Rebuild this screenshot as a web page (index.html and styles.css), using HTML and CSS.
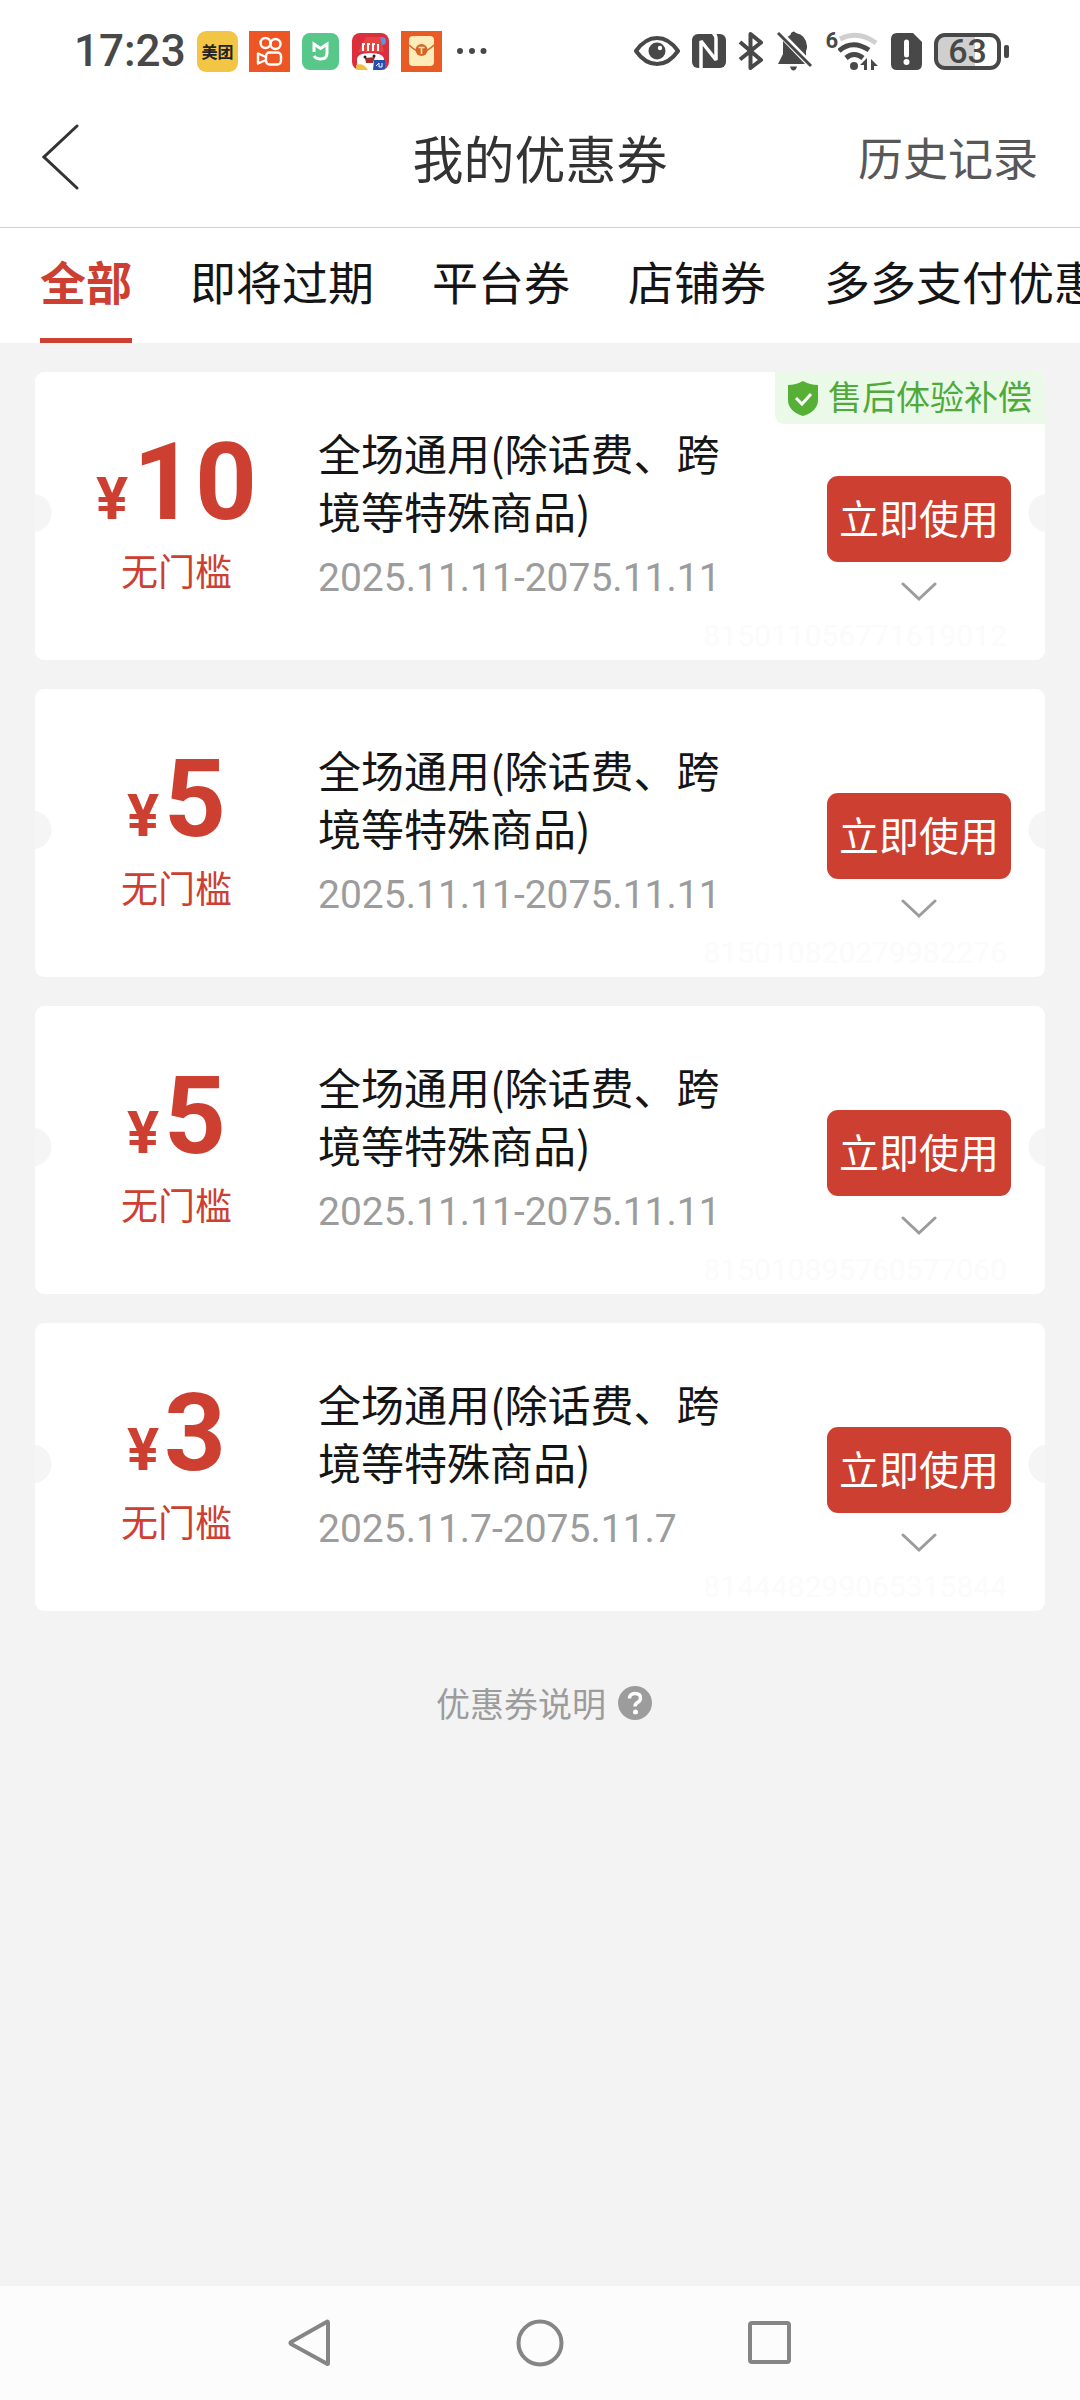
FILE: index.html
```html
<!DOCTYPE html>
<html lang="zh-CN">
<head>
<meta charset="utf-8">
<meta name="viewport" content="width=device-width, initial-scale=1">
<title>我的优惠券</title>
<link rel="stylesheet" href="styles.css">
</head>
<body>
<div class="screen">
  <div class="status">
    <span class="status-time">17:23</span>
    <div class="status-apps">
      <span class="app-meituan">美团</span>
      <svg width="41" height="41" viewBox="0 0 41 41"><rect width="41" height="41" fill="#ee5524"/><g fill="none" stroke="#fff" stroke-width="2.4" stroke-linejoin="round"><circle cx="16.500" cy="12" r="5"/><circle cx="26.500" cy="13" r="5"/><rect x="17" y="21.500" width="15" height="12" rx="3.500"/><path d="M17 26l-8-3.500v10l8-3.500"/></g></svg>
      <svg class="app-small" width="37" height="37" viewBox="0 0 37 37"><rect width="37" height="37" rx="8" fill="#57c78a"/><path d="M12 19V11l6.500 4.500L25 11v9q0 6-6.500 6-4.500 0-6.500-3" fill="none" stroke="#fff" stroke-width="3"/></svg>
      <svg class="app-small" width="37" height="37" viewBox="0 0 37 37"><clipPath id="festive"><rect width="37" height="37" rx="8"/></clipPath><g clip-path="url(#festive)"><rect width="37" height="37" fill="#dc2f3d"/><circle cx="30" cy="8" r="4" fill="#5d92dd"/><path d="M6 19L14 4l14 0 4 15z" fill="#e84340"/><path d="M11 18v-7M16 18v-7M21 18v-7M26 18v-7M10 11h3M15 11h3M20 11h3" stroke="#fff" stroke-width="2" fill="none"/><path d="M5 27q0-7 13-7 14 0 14 7v10H5z" fill="#fff"/><path d="M13 25l10-1-2 6h-7z" fill="#a72c27"/><circle cx="13" cy="24" r="1.500" fill="#222"/><circle cx="22" cy="23" r="1.500" fill="#222"/><path d="M4 32q7-3 12 5H4z" fill="#f1bd42"/><path d="M22 27h11v10H21z" fill="#244fae"/><path d="M24 33l3-3v4h3v-4" stroke="#fff" fill="none"/></g></svg>
      <svg width="41" height="41" viewBox="0 0 41 41"><rect width="41" height="41" fill="#e85b24"/><rect x="8" y="5" width="25" height="30" rx="4" fill="#fdebba"/><path d="M8 14q12.500 13 25 0" fill="none" stroke="#d26427" stroke-width="1.500"/><circle cx="20.500" cy="19" r="6" fill="#d66426"/><path d="M17.500 16.500h6M20.500 16.500v6.500" stroke="#fdebba" stroke-width="1.500"/></svg>
      <svg class="more" width="30" height="8" viewBox="0 0 30 8" fill="#484848"><circle cx="3" cy="4" r="3"/><circle cx="15" cy="4" r="3"/><circle cx="26.500" cy="4" r="3"/></svg>
    </div>
    <div class="status-system">
      <svg width="46" height="32" viewBox="0 0 46 32"><path d="M2 16Q11 3 23 3t21 13Q35 29 23 29T2 16z" fill="none" stroke="#484848" stroke-width="4"/><circle cx="23" cy="16" r="8.500" fill="#484848"/><circle cx="26" cy="13" r="2.200" fill="#fff"/></svg>
      <svg width="34" height="36" viewBox="0 0 34 36"><rect y="1" width="34" height="34" rx="6" fill="#484848"/><path d="M9 36q0-2 0-4V8l15 19V5q0-3-3-5" fill="none" stroke="#fff" stroke-width="3.500" stroke-linejoin="bevel"/></svg>
      <svg width="27" height="38" viewBox="0 0 27 38"><path d="M2 10l21 18-10.500 8V2L23 10.500 2 27.500" fill="none" stroke="#484848" stroke-width="4" stroke-linejoin="round"/></svg>
      <svg width="36" height="40" viewBox="0 0 36 40"><path d="M1 33h27L6 10v13zM12 5q2-1 2-3 3-3 5 0 10 2 11 13v12L10 6zM13 35.500h7q-1 4-3.500 4T13 35.500z" fill="#484848"/><path d="M29 32.500V17L34 33z" fill="#fff"/><path d="M4 1l33 34" stroke="#fff" stroke-width="3"/><path d="M1 2l33 33" stroke="#484848" stroke-width="3"/></svg>
      <div class="wifi"><span class="wifi-gen">6</span><svg width="41" height="38" viewBox="0 0 41 38" fill="none"><path d="M2 7q18-9 36 4" stroke="#cfcfcf" stroke-width="5"/><path d="M1 19q13-12 30-1" stroke="#484848" stroke-width="5"/><path d="M8 26q8-7 17 0" stroke="#484848" stroke-width="5"/><circle cx="16" cy="34" r="4" fill="#484848"/><path d="M29 28v10h-3v-5h-4l7-7zM33 27l7 7h-4v4h-3z" fill="#484848"/></svg></div>
      <svg width="31" height="37" viewBox="0 0 31 37"><path d="M6 0h16l9 9v22q0 6-6 6H6q-6 0-6-6V6q0-6 6-6z" fill="#484848"/><path d="M15.500 9v13" stroke="#fff" stroke-width="5" stroke-linecap="round"/><circle cx="15.500" cy="29" r="3" fill="#fff"/></svg>
      <div class="battery"><span class="battery-body">63</span><span class="battery-tip"></span></div>
    </div>
  </div>

  <header class="header">
    <button class="back" type="button" aria-label="返回"><svg width="37" height="66" viewBox="0 0 37 66"><path d="M35 2L2 33l33 31" fill="none" stroke="#333" stroke-width="3" stroke-linecap="round"/></svg></button>
    <h1 class="title">我的优惠券</h1>
    <a class="history" href="#history">历史记录</a>
  </header>

  <nav class="tabs">
    <button class="tab tab-active" type="button">全部</button>
    <button class="tab" type="button">即将过期</button>
    <button class="tab" type="button">平台券</button>
    <button class="tab" type="button">店铺券</button>
    <button class="tab" type="button">多多支付优惠</button>
  </nav>

  <main class="coupons">
    <article class="coupon">
      <div class="value"><p class="amount"><span class="yen">¥</span>10</p><p class="limit">无门槛</p></div>
      <div class="detail"><h2 class="scope">全场通用(除话费、跨境等特殊商品)</h2><p class="dates">2025.11.11-2075.11.11</p></div>
      <div class="actions"><button class="use" type="button">立即使用</button><button class="expand" type="button" aria-label="展开"><svg width="36" height="20" viewBox="0 0 36 20"><path d="M2 2l16 15L34 2" fill="none" stroke="#9c9c9c" stroke-width="3" stroke-linecap="round"/></svg></button></div>
      <span class="serial">815011056771619012</span>
      <span class="tag"><svg width="30" height="35" viewBox="0 0 30 35"><path d="M15 0q7 4 15 4v15q0 11-15 16Q0 30 0 19V4q8 0 15-4z" fill="#56b035"/><path d="M8 17l6 6 9-10" fill="none" stroke="#fff" stroke-width="3"/></svg><span class="tag-text">售后体验补偿</span></span>
    </article>
    <article class="coupon">
      <div class="value"><p class="amount"><span class="yen">¥</span>5</p><p class="limit">无门槛</p></div>
      <div class="detail"><h2 class="scope">全场通用(除话费、跨境等特殊商品)</h2><p class="dates">2025.11.11-2075.11.11</p></div>
      <div class="actions"><button class="use" type="button">立即使用</button><button class="expand" type="button" aria-label="展开"><svg width="36" height="20" viewBox="0 0 36 20"><path d="M2 2l16 15L34 2" fill="none" stroke="#9c9c9c" stroke-width="3" stroke-linecap="round"/></svg></button></div>
      <span class="serial">815010820279982276</span>
    </article>
    <article class="coupon">
      <div class="value"><p class="amount"><span class="yen">¥</span>5</p><p class="limit">无门槛</p></div>
      <div class="detail"><h2 class="scope">全场通用(除话费、跨境等特殊商品)</h2><p class="dates">2025.11.11-2075.11.11</p></div>
      <div class="actions"><button class="use" type="button">立即使用</button><button class="expand" type="button" aria-label="展开"><svg width="36" height="20" viewBox="0 0 36 20"><path d="M2 2l16 15L34 2" fill="none" stroke="#9c9c9c" stroke-width="3" stroke-linecap="round"/></svg></button></div>
      <span class="serial">815010895760577060</span>
    </article>
    <article class="coupon">
      <div class="value"><p class="amount"><span class="yen">¥</span>3</p><p class="limit">无门槛</p></div>
      <div class="detail"><h2 class="scope">全场通用(除话费、跨境等特殊商品)</h2><p class="dates">2025.11.7-2075.11.7</p></div>
      <div class="actions"><button class="use" type="button">立即使用</button><button class="expand" type="button" aria-label="展开"><svg width="36" height="20" viewBox="0 0 36 20"><path d="M2 2l16 15L34 2" fill="none" stroke="#9c9c9c" stroke-width="3" stroke-linecap="round"/></svg></button></div>
      <span class="serial">814448299065315844</span>
    </article>
    <a class="help" href="#help">优惠券说明<svg width="34" height="34" viewBox="0 0 34 34"><circle cx="17" cy="17" r="17" fill="#9c9c9c"/><path d="M11.500 12.500q0-5 5.500-5t5.500 4.500q0 3-3 4.500-2.500 1.500-2.500 4" fill="none" stroke="#fff" stroke-width="3.400"/><circle cx="17.500" cy="26" r="2.500" fill="#fff"/></svg></a>
  </main>

  <nav class="system-nav">
    <button type="button" aria-label="返回"><svg width="48" height="48" viewBox="0 0 48 48"><path d="M42 3.500v41q0 1-1.500 0L5 25q-1-1 0-2L40.500 3q1.500-1 1.500.5z"/></svg></button>
    <button type="button" aria-label="主页"><svg width="48" height="48" viewBox="0 0 48 48"><circle cx="24" cy="24" r="21.500"/></svg></button>
    <button type="button" aria-label="最近任务"><svg width="48" height="48" viewBox="0 0 48 48"><rect x="4" y="4" width="39" height="39" rx="2"/></svg></button>
  </nav>
</div>
</body>
</html>
```
FILE: styles.css
```css
* { box-sizing: border-box; }

body {
  margin: 0;
  font-family: "Noto Sans CJK SC", sans-serif;
  background: #f3f3f3;
  color: #151515;
}

h1, h2, p { margin: 0; font-weight: 400; }
a { color: inherit; text-decoration: none; }
button {
  margin: 0;
  padding: 0;
  border: 0;
  background: none;
  font: inherit;
  color: inherit;
}
svg { display: block; flex: none; }

.screen {
  display: flex;
  flex-direction: column;
  min-height: 100vh;
}

/* Phone status bar */
.status {
  display: flex;
  align-items: center;
  height: 91px;
  padding: 11px 71px 0 74px;
  background: #fff;
  color: #484848;
  font-family: Roboto, sans-serif;
  font-weight: 500;
}
.status-time { width: 123px; font-size: 44px; }
.status-apps, .status-system { display: flex; align-items: center; }
.status-apps { gap: 11px; }
.app-meituan {
  width: 41px;
  border-radius: 9px;
  background: #f3c544;
  color: #222;
  font: 700 16px/41px "Noto Sans CJK SC", sans-serif;
  text-align: center;
}
.app-small { margin: 0 1px; }
.more { margin-left: 4px; }
.status-system { gap: 12px; margin-left: auto; }
.wifi { display: flex; }
.wifi-gen { height: 38px; margin-top: -4px; font-size: 22px; line-height: 26px; font-weight: 700; }
.battery { display: flex; align-items: center; gap: 3px; }
.battery-body {
  width: 67px;
  border: 4px solid #484848;
  border-radius: 11px;
  background: linear-gradient(90deg, #cfcfcf 63%, #fff 63%);
  font-size: 34px;
  line-height: 29px;
  text-align: center;
}
.battery-tip { width: 5px; height: 13px; border-radius: 2px; background: #484848; }

/* Page header */
.header {
  display: grid;
  grid-template-columns: 1fr auto 1fr;
  align-items: center;
  height: 137px;
  padding: 0 42px 4px;
  border-bottom: 1px solid #d2d2d2;
  background: #fff;
}
.back { justify-self: start; }
.title { font-size: 51px; line-height: 70px; color: #333; }
.history { justify-self: end; font-size: 45px; line-height: 70px; color: #585858; }

.tabs {
  display: flex;
  gap: 58px;
  height: 115px;
  padding: 0 40px;
  overflow: hidden;
  background: #fff;
}
.tab {
  flex: none;
  padding-bottom: 6px;
  border-bottom: 5px solid transparent;
  font-size: 46px;
  line-height: 104px;
}
.tab-active { border-color: #cd3f31; color: #cd3f31; font-weight: 700; }

/* Coupon list */
.coupons {
  flex: 1;
  display: flex;
  flex-direction: column;
  gap: 29px;
  padding: 29px 35px;
}
.coupon {
  position: relative;
  display: grid;
  grid-template-columns: 283px minmax(0, 414px) auto;
  min-height: 288px;
  padding-right: 34px;
  border-radius: 9px;
  background:
    radial-gradient(circle at -3px 141px, #f5f5f5 19px, transparent 20px),
    radial-gradient(circle at calc(100% + 3px) 141px, #f5f5f5 19px, transparent 20px),
    #fff;
}
.value { padding-top: 70px; text-align: center; color: #cd3f31; }
.amount { font: 700 108px/80px Roboto, sans-serif; }
.yen { margin-right: 5px; font-size: 60px; line-height: 1px; }
.limit { margin-top: 26px; font-size: 37px; line-height: 44px; }
.detail { padding-top: 51px; }
.scope { font-size: 43px; line-height: 58px; }
.dates {
  margin-top: 17px;
  font: 39px/44px Roboto, sans-serif;
  color: #9c9c9c;
}
.actions {
  display: flex;
  flex-direction: column;
  align-items: center;
  justify-self: end;
  padding-top: 104px;
}
.use {
  width: 184px;
  padding-bottom: 4px;
  border-radius: 11px;
  background: #cd3f31;
  color: #fff;
  font-size: 40px;
  line-height: 82px;
}
.expand { padding: 20px; }
.serial {
  position: absolute;
  right: 38px;
  bottom: 4px;
  font: 30px/40px Roboto, sans-serif;
  color: #fbfbfb;
}
.tag {
  position: absolute;
  top: 0;
  right: 0;
  display: flex;
  align-items: center;
  gap: 10px;
  padding: 0 13px;
  border-radius: 0 9px 0 9px;
  background: #ebfae8;
  color: #50aa3b;
  font-size: 34px;
  line-height: 48px;
}
.tag-text { padding-bottom: 4px; }
.help {
  display: flex;
  align-items: center;
  align-self: center;
  gap: 12px;
  margin-top: 38px;
  padding-left: 8px;
  font-size: 34px;
  line-height: 50px;
  color: #9c9c9c;
}

/* Phone navigation bar */
.system-nav {
  display: flex;
  align-items: center;
  justify-content: center;
  gap: 182px;
  height: 114px;
  background: #fcfcfc;
}
.system-nav svg { fill: none; stroke: #858585; stroke-width: 4; }
```
